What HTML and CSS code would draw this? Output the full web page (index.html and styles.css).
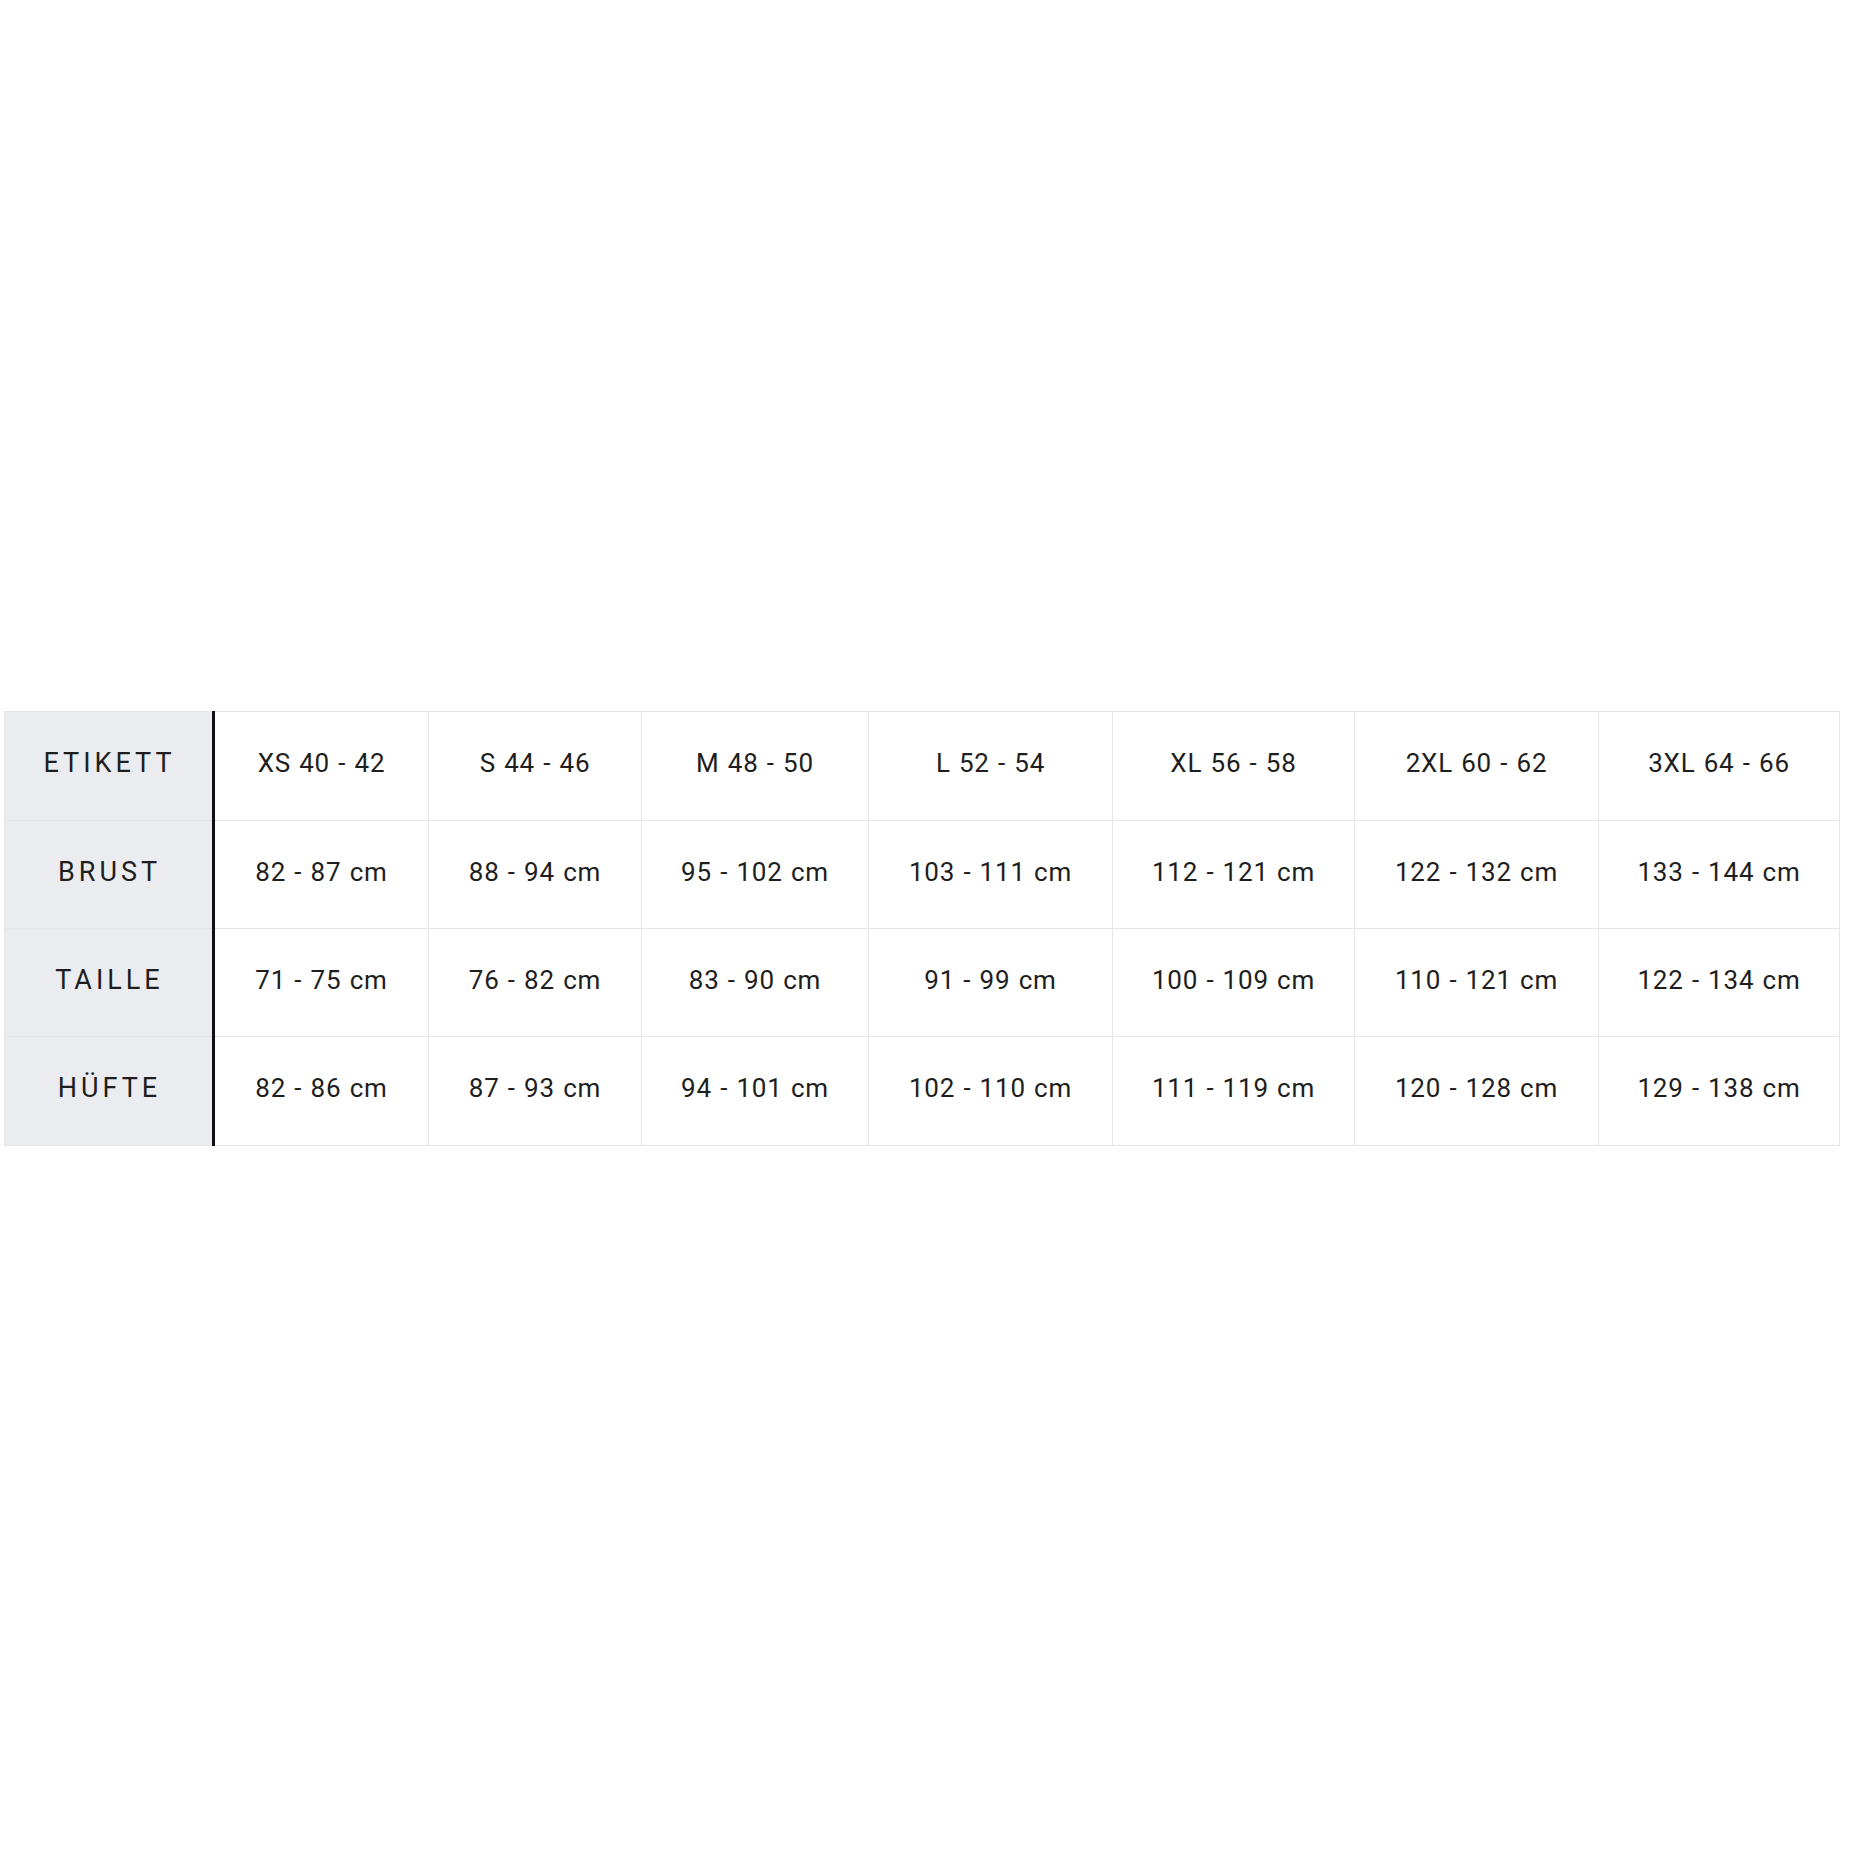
FILE: index.html
```html
<!DOCTYPE html>
<html lang="de">
<head>
<meta charset="utf-8">
<title>Größentabelle</title>
<link rel="stylesheet" href="styles.css">
</head>
<body>
<div class="page">
  <table class="sizes">
    <colgroup>
      <col class="c-label">
      <col class="c-xs">
      <col class="c-s">
      <col class="c-m">
      <col class="c-l">
      <col class="c-xl">
      <col class="c-2xl">
      <col class="c-3xl">
    </colgroup>
    <tbody>
      <tr class="row-tall">
        <th>ETIKETT</th>
        <td>XS 40 - 42</td><td>S 44 - 46</td><td>M 48 - 50</td><td>L 52 - 54</td><td>XL 56 - 58</td><td>2XL 60 - 62</td><td>3XL 64 - 66</td>
      </tr>
      <tr>
        <th>BRUST</th>
        <td>82 - 87 cm</td><td>88 - 94 cm</td><td>95 - 102 cm</td><td>103 - 111 cm</td><td>112 - 121 cm</td><td>122 - 132 cm</td><td>133 - 144 cm</td>
      </tr>
      <tr>
        <th>TAILLE</th>
        <td>71 - 75 cm</td><td>76 - 82 cm</td><td>83 - 90 cm</td><td>91 - 99 cm</td><td>100 - 109 cm</td><td>110 - 121 cm</td><td>122 - 134 cm</td>
      </tr>
      <tr class="row-tall">
        <th>HÜFTE</th>
        <td>82 - 86 cm</td><td>87 - 93 cm</td><td>94 - 101 cm</td><td>102 - 110 cm</td><td>111 - 119 cm</td><td>120 - 128 cm</td><td>129 - 138 cm</td>
      </tr>
    </tbody>
  </table>
</div>
</body>
</html>
```
FILE: styles.css
```css
html, body {
  margin: 0;
  padding: 0;
  background: #ffffff;
}

.page {
  padding: 711px 0 0 4px;
  width: 1849px;
  height: 1849px;
  box-sizing: border-box;
}

.sizes {
  border-collapse: collapse;
  table-layout: fixed;
  width: 1835px;
  font-family: Roboto, "Liberation Sans", sans-serif;
  color: #1e1e1e;
}

.c-label { width: 209px; }
.c-xs { width: 215px; }
.c-s { width: 213px; }
.c-m { width: 227px; }
.c-l { width: 244px; }
.c-xl { width: 242px; }
.c-2xl { width: 244px; }
.c-3xl { width: 241px; }

.sizes tr {
  height: 108px;
}

.sizes tr.row-tall {
  height: 109px;
}

.sizes th,
.sizes td {
  border: 1px solid #e6e6e8;
  padding: 0 0 6px 0;
  text-align: center;
  vertical-align: middle;
  font-size: 26px;
  font-weight: 400;
  letter-spacing: 0.8px;
  word-spacing: 1px;
}

.sizes th {
  background: #ebecef;
  border-right: 3px solid #111111;
  letter-spacing: 4px;
  font-size: 27px;
  padding-left: 2px;
}
```
